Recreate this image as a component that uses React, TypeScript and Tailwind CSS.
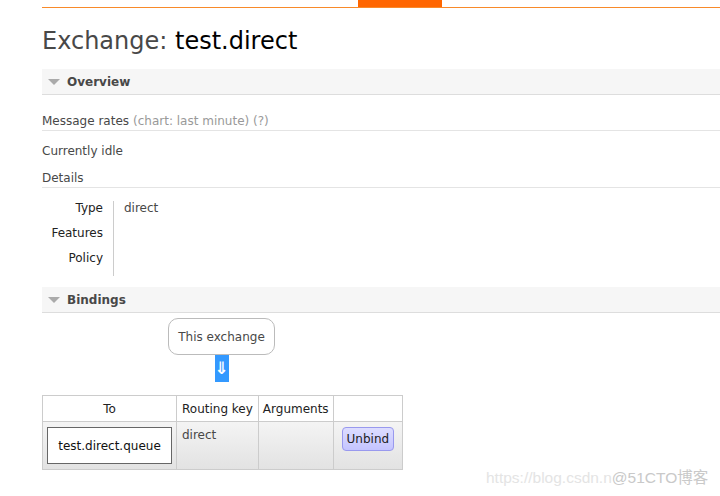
import React from "react";

const font = { fontFamily: '"DejaVu Sans", Verdana, sans-serif' };

function SectionHeader({ title }: { title: string }) {
  return (
    <div className="flex h-[26px] items-center border-b border-[#dddddd] bg-[#f6f6f6] pl-[6px]">
      <svg width="12" height="8" viewBox="0 0 12 8" className="mr-[7px]">
        <polygon points="0,1 12,1 6,7" fill="#aaaaaa" />
      </svg>
      <span className="text-[12px] font-bold text-[#484848]">{title}</span>
    </div>
  );
}

export default function App() {
  const details = [
    { label: "Type", value: "direct" },
    { label: "Features", value: "" },
    { label: "Policy", value: "" },
  ];

  return (
    <div className="relative h-[496px] w-[720px] overflow-hidden bg-white text-[12px] text-[#484848]" style={font}>
      {/* top nav line */}
      <div className="ml-[42px] flex h-[8px] items-end border-b border-[#f88a2a]">
        <div className="ml-[316px] h-[8px] w-[84px] bg-[#ff6600]" />
      </div>

      <div className="pl-[42px]">
        <h1 className="mt-[18px] h-[30px] text-[24px] leading-[30px] text-[#484848]">
          Exchange: <span className="text-black">test.direct</span>
        </h1>

        <div className="mt-[13px]">
          <SectionHeader title="Overview" />
        </div>

        <div className="mt-[18px] flex h-[18px] items-center border-b border-[#e4e4e4] pb-[2px]">
          Message rates <span className="ml-[4px] text-[#999999]">(chart: last minute) (?)</span>
        </div>
        <div className="mt-[12px] h-[16px] leading-[16px]">Currently idle</div>
        <div className="mt-[11px] h-[18px] border-b border-[#e4e4e4] leading-[16px]">Details</div>

        <div className="mt-[13px] flex">
          <div className="w-[72px] border-r border-[#cccccc] pr-[10px] text-right text-[#222222]">
            {details.map((d) => (
              <div key={d.label} className="h-[25px] leading-[15px]">
                {d.label}
              </div>
            ))}
          </div>
          <div className="pl-[10px]">
            {details.map((d) => (
              <div key={d.label} className="h-[25px] leading-[15px]">
                {d.value}
              </div>
            ))}
          </div>
        </div>

        <div className="mt-[11px]">
          <SectionHeader title="Bindings" />
        </div>

        <div className="ml-[126px] mt-[5px] flex w-[107px] flex-col items-center">
          <div className="flex h-[37px] w-[107px] items-center justify-center rounded-[10px] border border-[#bbbbbb] text-[#484848]">
            This exchange
          </div>
          <div className="flex h-[27px] w-[14px] items-center justify-center bg-[#3399ff] text-[17px] font-bold leading-none text-white">
            ⇓
          </div>
        </div>

        <table className="mt-[13px] border-collapse border border-[#cccccc] text-[12px]">
          <thead>
            <tr className="h-[26px] text-[#222222]">
              <th className="w-[134px] whitespace-nowrap border border-[#cccccc] px-[5px] text-center font-normal">To</th>
              <th className="w-[80px] whitespace-nowrap border border-[#cccccc] px-[5px] text-left font-normal">Routing key</th>
              <th className="w-[75px] whitespace-nowrap border border-[#cccccc] px-[4px] text-left font-normal">Arguments</th>
              <th className="w-[69px] border border-[#cccccc]" />
            </tr>
          </thead>
          <tbody>
            <tr className="h-[48px] bg-gradient-to-b from-[#f4f4f4] to-[#e2e2e2]">
              <td className="border border-[#cccccc] px-[4px] py-[5px]">
                <div className="flex h-[37px] items-center justify-center whitespace-nowrap border border-[#666666] bg-white text-[#111111]">
                  test.direct.queue
                </div>
              </td>
              <td className="border border-[#cccccc] px-[5px] pt-[4px] align-top">direct</td>
              <td className="border border-[#cccccc]" />
              <td className="border border-[#cccccc] pt-[5px] align-top">
                <div className="flex justify-center">
                  <button className="h-[24px] rounded-[4px] border border-[#9999ee] bg-gradient-to-b from-[#ddddff] to-[#c4c4ff] px-[4px] text-[12px] text-[#222222]" style={font}>
                    Unbind
                  </button>
                </div>
              </td>
            </tr>
          </tbody>
        </table>
      </div>

      {/* watermark */}
      <div className="absolute left-[486px] top-[466px] flex items-center whitespace-nowrap" style={{ fontFamily: '"Liberation Sans", "Noto Sans CJK SC", sans-serif' }}>
        <span className="text-[15.5px] text-[#e4e4e4]">https://blog.csdn.n</span>
        <span className="text-[15.5px] text-[#c9c9c9]">@51CTO博客</span>
      </div>
    </div>
  );
}
